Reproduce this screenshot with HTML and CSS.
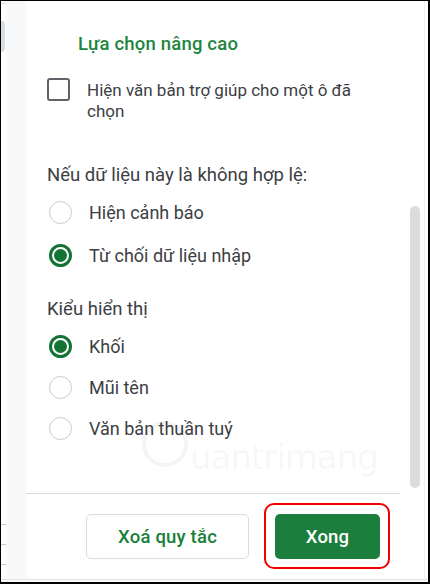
FILE: index.html
```html
<!DOCTYPE html>
<html lang="vi">
<head>
<meta charset="utf-8">
<title>Lựa chọn nâng cao</title>
<link rel="stylesheet" href="styles.css">
</head>
<body>
<div class="frame">
  <div class="main">
    <div class="sheet-edge">
      <div class="sheet-col">
        <div class="sheet-tick"></div>
        <div class="sheet-bar"></div>
        <div class="sheet-grid">
          <div class="grid-line"></div>
          <div class="grid-line"></div>
          <div class="grid-line"></div>
        </div>
      </div>
      <div class="sheet-gutter"></div>
    </div>
    <div class="panel">
      <div class="content">
        <div class="scroll">
          <div class="title">Lựa chọn nâng cao</div>
          <label class="check-row">
            <span class="checkbox"></span>
            <span class="check-text">Hiện văn bản trợ giúp cho một ô đã chọn</span>
          </label>
          <div class="section-label first">Nếu dữ liệu này là không hợp lệ:</div>
          <div class="radio-group tall">
            <div class="radio-row"><span class="radio"></span><span class="radio-text">Hiện cảnh báo</span></div>
            <div class="radio-row"><span class="radio on"></span><span class="radio-text">Từ chối dữ liệu nhập</span></div>
          </div>
          <div class="section-label second">Kiểu hiển thị</div>
          <div class="radio-group short">
            <div class="radio-row"><span class="radio on"></span><span class="radio-text">Khối</span></div>
            <div class="radio-row"><span class="radio"></span><span class="radio-text">Mũi tên</span></div>
            <div class="radio-row"><span class="radio"></span><span class="radio-text">Văn bản thuần tuý</span></div>
          </div>
          <div class="watermark"><span class="wm-q"></span><span class="wm-text">uantrimang</span></div>
        </div>
        <div class="footer">
          <button class="btn btn-outline">Xoá quy tắc</button>
          <div class="highlight-wrap">
            <button class="btn btn-primary">Xong</button>
            <span class="highlight"></span>
          </div>
        </div>
      </div>
      <div class="track"><div class="thumb"></div></div>
    </div>
    <div class="right-gap"></div>
  </div>
  <div class="bottom-strip"></div>
</div>
</body>
</html>
```
FILE: styles.css
```css
* { box-sizing: border-box; }

html, body {
  margin: 0;
  padding: 0;
  background: #ffffff;
}

body {
  font-family: Roboto, "Noto Sans", "Liberation Sans", sans-serif;
  color: #3c4043;
}

.frame {
  width: 430px;
  height: 584px;
  border-top: 1px solid #000;
  border-left: 1px solid #000;
  border-right: 2px solid #000;
  border-bottom: 2px solid #000;
  background: #f8f9fa;
  display: flex;
  flex-direction: column;
  overflow: hidden;
}

.main {
  flex: 1;
  display: flex;
  min-height: 0;
}

.sheet-edge {
  width: 25px;
  display: flex;
}

.sheet-col {
  width: 5px;
  background: #ffffff;
  display: flex;
  flex-direction: column;
}

.sheet-tick {
  height: 1px;
  margin-top: 2px;
  background: #dadce0;
}

.sheet-bar {
  margin-top: 17px;
  height: 31px;
  width: 4px;
  background: #dadce0;
  border-radius: 0 3px 3px 0;
}

.sheet-grid {
  margin-top: auto;
  margin-bottom: 14px;
  display: flex;
  flex-direction: column;
  gap: 19px;
}

.grid-line {
  height: 1px;
  background: #c8cacf;
}

.sheet-gutter {
  flex: 1;
  background: #f8f9fa;
}

.panel {
  width: 399px;
  background: #ffffff;
  border-right: 1px solid #eef0f2;
  border-bottom-left-radius: 9px;
  display: flex;
}

.content {
  width: 375px;
  display: flex;
  flex-direction: column;
}

.scroll {
  flex: 1;
  padding-left: 21px;
  padding-top: 31px;
  position: relative;
}

.title {
  margin-left: 31px;
  font-size: 18.5px;
  line-height: 24px;
  font-weight: 500;
  color: #1e8540;
  letter-spacing: 0.2px;
}

.check-row {
  margin-top: 22px;
  display: flex;
  align-items: flex-start;
}

.checkbox {
  flex: none;
  width: 23px;
  height: 23px;
  border: 2px solid #5f6368;
  border-radius: 3px;
}

.check-text {
  margin-left: 17px;
  padding-top: 2px;
  width: 290px;
  font-size: 17px;
  line-height: 21px;
  color: #3c4043;
}

.section-label {
  font-size: 18.5px;
  line-height: 24px;
  color: #3c4043;
}

.section-label.first { margin-top: 41px; }
.section-label.second { margin-top: 20px; }

.radio-group.tall { margin-top: 4px; }
.radio-group.tall .radio-row { height: 43px; }
.radio-group.short { margin-top: 5px; }
.radio-group.short .radio-row { height: 41px; }

.radio-row {
  display: flex;
  align-items: center;
  padding-left: 2px;
}

.radio {
  flex: none;
  width: 23px;
  height: 23px;
  border-radius: 50%;
  border: 1px solid #c9cbcf;
  background: #ffffff;
  position: relative;
}

.radio.on {
  border: 3px solid #137333;
}

.radio.on::after {
  content: "";
  position: absolute;
  left: 2px;
  top: 2px;
  width: 13px;
  height: 13px;
  border-radius: 50%;
  background: #137333;
}

.radio-text {
  margin-left: 17px;
  font-size: 18px;
  line-height: 22px;
  color: #3c4043;
}

.watermark {
  position: absolute;
  left: 116px;
  top: 420px;
  display: flex;
  align-items: flex-end;
  pointer-events: none;
}

.wm-q {
  width: 46px;
  height: 46px;
  border-radius: 50%;
  border: 4px solid rgba(0, 0, 0, 0.045);
}

.wm-text {
  margin-left: 2px;
  font-family: "DejaVu Sans", sans-serif;
  font-size: 34px;
  line-height: 20px;
  height: 20px;
  padding-bottom: 4px;
  letter-spacing: -1px;
  color: rgba(0, 0, 0, 0.045);
}

.footer {
  flex: none;
  height: 86px;
  border-top: 1px solid #dadce0;
  display: flex;
  justify-content: flex-end;
  align-items: flex-start;
  padding-top: 20px;
  padding-right: 20px;
  gap: 26px;
}

.btn {
  height: 45px;
  border-radius: 5px;
  font-family: Roboto, "Noto Sans", "Liberation Sans", sans-serif;
  font-size: 18.5px;
  font-weight: 500;
  letter-spacing: 0.2px;
  cursor: pointer;
}

.btn-outline {
  width: 163px;
  background: #ffffff;
  border: 1px solid #dadce0;
  color: #188038;
}

.btn-primary {
  width: 105px;
  background: #1b7e3c;
  border: none;
  color: #ffffff;
}

.highlight-wrap {
  position: relative;
  display: flex;
}

.highlight {
  position: absolute;
  left: -11px;
  top: -11px;
  right: -10px;
  bottom: -10px;
  border: 2.5px solid #f00000;
  border-radius: 10px;
  pointer-events: none;
}

.track {
  width: 24px;
  padding-left: 10px;
  padding-top: 205px;
}

.thumb {
  width: 10px;
  height: 282px;
  border-radius: 5px;
  background: #dadce0;
}

.right-gap {
  width: 3px;
  background: #ffffff;
}

.bottom-strip {
  height: 3px;
  border-top: 1px solid #e3e5e8;
  background: #f8f9fa;
}
```
